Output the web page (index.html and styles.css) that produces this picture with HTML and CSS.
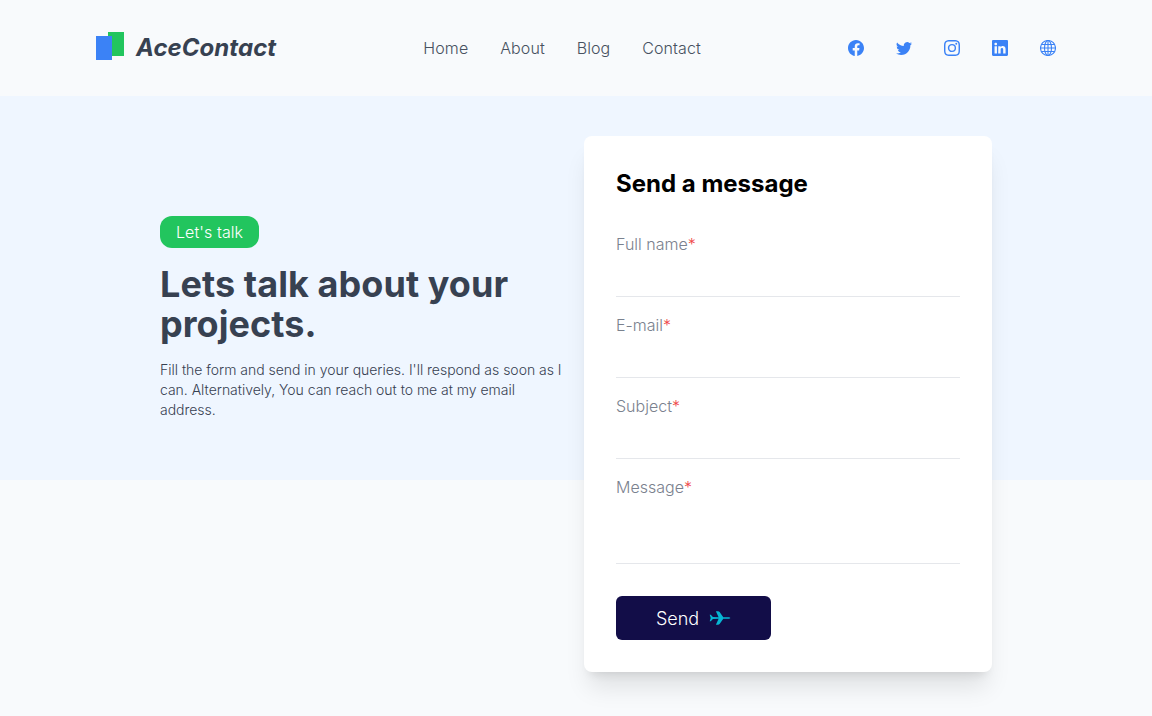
FILE: index.html
```html
<!DOCTYPE html>
<html lang="en">
<head>
<meta charset="utf-8">
<title>AceContact</title>
<link rel="stylesheet" href="styles.css">
</head>
<body>
<header class="header">
  <div class="brand">
    <span class="mark"><span class="mark-back"></span><span class="mark-front"></span></span>
    <span class="brand-name">AceContact</span>
  </div>
  <nav class="nav"><a>Home</a><a>About</a><a>Blog</a><a>Contact</a></nav>
  <div class="social">
    <svg viewBox="0 0 16 16"><path d="M16 8.049c0-4.446-3.582-8.05-8-8.05C3.58 0-.002 3.603-.002 8.05c0 4.017 2.926 7.347 6.75 7.951v-5.625h-2.03V8.05H6.75V6.275c0-2.017 1.195-3.131 3.022-3.131.876 0 1.791.157 1.791.157v1.98h-1.009c-.993 0-1.303.621-1.303 1.258v1.51h2.218l-.354 2.326H9.25V16c3.824-.604 6.75-3.934 6.75-7.951z"/></svg>
    <svg viewBox="0 0 16 16"><path d="M5.026 15c6.038 0 9.341-5.003 9.341-9.334 0-.14 0-.282-.006-.422A6.685 6.685 0 0 0 16 3.542a6.658 6.658 0 0 1-1.889.518 3.301 3.301 0 0 0 1.447-1.817 6.533 6.533 0 0 1-2.087.793A3.286 3.286 0 0 0 7.875 6.03a9.325 9.325 0 0 1-6.767-3.429 3.289 3.289 0 0 0 1.018 4.382A3.323 3.323 0 0 1 .64 6.575v.045a3.288 3.288 0 0 0 2.632 3.218 3.203 3.203 0 0 1-.865.115 3.23 3.23 0 0 1-.614-.057 3.283 3.283 0 0 0 3.067 2.277A6.588 6.588 0 0 1 .78 13.58a6.32 6.32 0 0 1-.78-.045A9.344 9.344 0 0 0 5.026 15z"/></svg>
    <svg viewBox="0 0 16 16"><path d="M8 0C5.829 0 5.556.01 4.703.048 3.85.088 3.269.222 2.76.42a3.917 3.917 0 0 0-1.417.923A3.927 3.927 0 0 0 .42 2.76C.222 3.268.087 3.85.048 4.7.01 5.555 0 5.827 0 8.001c0 2.172.01 2.444.048 3.297.04.852.174 1.433.372 1.942.205.526.478.972.923 1.417.444.445.89.719 1.416.923.51.198 1.09.333 1.942.372C5.555 15.99 5.827 16 8 16s2.444-.01 3.298-.048c.851-.04 1.434-.174 1.943-.372a3.916 3.916 0 0 0 1.416-.923c.445-.445.718-.891.923-1.417.197-.509.332-1.09.372-1.942C15.99 10.445 16 10.173 16 8s-.01-2.445-.048-3.299c-.04-.851-.175-1.433-.372-1.941a3.926 3.926 0 0 0-.923-1.417A3.911 3.911 0 0 0 13.24.42c-.51-.198-1.092-.333-1.943-.372C10.443.01 10.172 0 7.998 0h.003zm-.717 1.442h.718c2.136 0 2.389.007 3.232.046.78.035 1.204.166 1.486.275.373.145.64.319.92.599.28.28.453.546.598.92.11.281.24.705.275 1.485.039.843.047 1.096.047 3.231s-.008 2.389-.047 3.232c-.035.78-.166 1.203-.275 1.485a2.47 2.47 0 0 1-.599.919c-.28.28-.546.453-.92.598-.28.11-.704.24-1.485.276-.843.038-1.096.047-3.232.047s-2.39-.009-3.233-.047c-.78-.036-1.203-.166-1.485-.276a2.478 2.478 0 0 1-.92-.598 2.48 2.48 0 0 1-.6-.92c-.109-.281-.24-.705-.275-1.485-.038-.843-.046-1.096-.046-3.233 0-2.136.008-2.388.046-3.231.036-.78.166-1.204.276-1.486.145-.373.319-.64.599-.92.28-.28.546-.453.92-.598.282-.11.705-.24 1.485-.276.738-.034 1.024-.044 2.515-.045v.002zm4.988 1.328a.96.96 0 1 0 0 1.92.96.96 0 0 0 0-1.92zm-4.27 1.122a4.109 4.109 0 1 0 0 8.217 4.109 4.109 0 0 0 0-8.217zm0 1.441a2.667 2.667 0 1 1 0 5.334 2.667 2.667 0 0 1 0-5.334z"/></svg>
    <svg viewBox="0 0 16 16"><path d="M0 1.146C0 .513.526 0 1.175 0h13.65C15.474 0 16 .513 16 1.146v13.708c0 .633-.526 1.146-1.175 1.146H1.175C.526 16 0 15.487 0 14.854V1.146zm4.943 12.248V6.169H2.542v7.225h2.401zm-1.2-8.212c.837 0 1.358-.554 1.358-1.248-.015-.709-.52-1.248-1.342-1.248-.822 0-1.359.54-1.359 1.248 0 .694.521 1.248 1.327 1.248h.016zm4.908 8.212V9.359c0-.216.016-.432.08-.586.173-.431.568-.878 1.232-.878.869 0 1.216.662 1.216 1.634v3.865h2.401V9.25c0-2.22-1.184-3.252-2.764-3.252-1.274 0-1.845.7-2.165 1.193v.025h-.016a5.54 5.54 0 0 1 .016-.025V6.169h-2.4c.03.678 0 7.225 0 7.225h2.4z"/></svg>
    <svg viewBox="0 0 16 16"><g class="globe"><circle cx="8" cy="8" r="7.5"/><ellipse cx="8" cy="8" rx="3.5" ry="7.5"/><path d="M8 .5v15M.5 8h15M1.5 4.5h13M1.5 11.5h13"/></g></svg>
  </div>
</header>
<main class="hero">
  <section class="intro">
    <span class="pill">Let's talk</span>
    <h1>Lets talk about your projects.</h1>
    <p>Fill the form and send in your queries. I'll respond as soon as I can. Alternatively, You can reach out to me at my email address.</p>
  </section>
  <form class="card">
    <h2>Send a message</h2>
    <label>Full name<b>*</b></label><input class="field" type="text">
    <label>E-mail<b>*</b></label><input class="field" type="text">
    <label>Subject<b>*</b></label><input class="field" type="text">
    <label>Message<b>*</b></label><textarea class="field message"></textarea>
    <button class="send" type="button"><span>Send</span><svg viewBox="0 0 22 22"><path d="M.7 7.7h1.1l2.1 2.4 5.7.1-2.7-6H9q1 0 1.6.8l3.7 5.2h4.800c1.400 0 2.200.3 2.200.8s-.8.8-2.200.8h-4.800L10.600 17q-.6.8-1.600.8H6.900l2.700-6-5.700.1-2.100 2.400H.7L1.700 11z"/></svg></button>
  </form>
</main>
</body>
</html>
```

FILE: styles.css
```css
* { box-sizing: border-box; }
body { margin: 0; height: 716px; overflow: hidden; background: #f8fafc; font-family: Inter, sans-serif; font-weight: 300; font-size: 16px; line-height: 24px; color: #374151; }
.header { height: 96px; padding: 0 96px; display: flex; align-items: center; justify-content: space-between; }
.brand { display: flex; align-items: center; gap: 12px; }
.mark { position: relative; width: 28px; height: 28px; margin-top: -4px; }
.mark-back, .mark-front { position: absolute; width: 16px; height: 24px; }
.mark-back { right: 0; top: 0; background: #22c55e; }
.mark-front { left: 0; bottom: 0; background: #3b82f6; }
.brand-name { font-size: 24px; line-height: 32px; font-weight: 700; font-style: italic; letter-spacing: .05px; }
.nav, .social { display: flex; gap: 32px; }
.nav { letter-spacing: .08px; color: #475160; }
.social svg { width: 16px; height: 16px; fill: #3b82f6; }
.social .globe { fill: none; stroke: #3b82f6; stroke-width: 1.1; }
.hero { height: 384px; padding: 40px 160px 0; background: #eff6ff; display: grid; grid-template-columns: 408px 408px; gap: 16px; }
.intro { padding-top: 80px; }
.pill { display: inline-block; padding: 4px 16px; border-radius: 12px; background: #22c55e; color: #fff; letter-spacing: .08px; }
.intro h1 { margin: 16px 0; font-size: 36px; line-height: 40px; font-weight: 700; letter-spacing: .07px; }
.intro p { margin: 0; font-size: 14px; line-height: 20px; letter-spacing: -.02px; }
.card { height: 536px; padding: 32px; background: #fff; border-radius: 8px; box-shadow: 0 20px 25px -5px #0000001a, 0 8px 10px -6px #0000001a; }
.card h2 { margin: 0 0 32px; color: #000; font-size: 24px; line-height: 32px; font-weight: 700; }
.card label { display: block; color: #7a818e; }
.card b { color: #ef4444; font-weight: 300; }
.field { display: block; width: 100%; height: 41px; margin: 0 0 16px; padding: 8px 0; border: 0; border-bottom: 1px solid #e5e7eb; background: transparent; font: inherit; outline: none; }
.message { height: 65px; margin-bottom: 32px; resize: none; }
.send { display: flex; align-items: center; justify-content: center; gap: 10px; width: 155px; height: 44px; padding: 0; border: 0; border-radius: 6px; background: #120d48; color: #fff; font: 300 18px/28px Inter, sans-serif; }
.send span { padding-top: 2px; }
.send svg { width: 22px; height: 22px; fill: #06b6d4; }
```
